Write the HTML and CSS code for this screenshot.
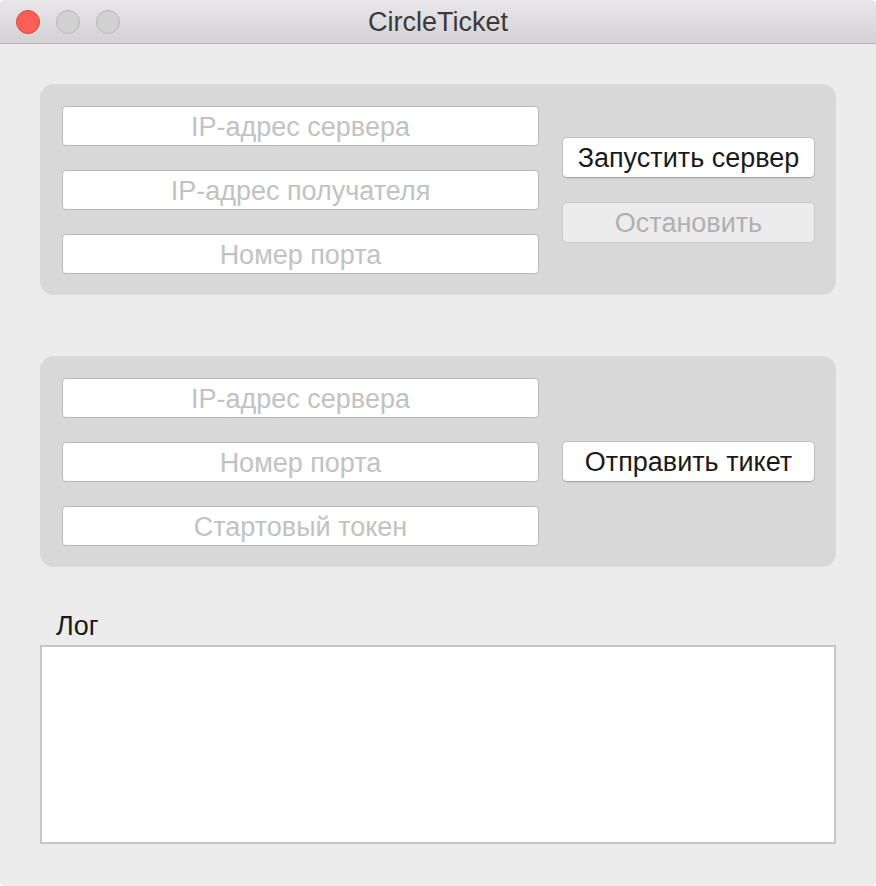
FILE: index.html
```html
<!DOCTYPE html>
<html lang="ru">
<head>
<meta charset="utf-8">
<title>CircleTicket</title>
<link rel="stylesheet" href="styles.css">
</head>
<body>
<div class="window">
  <div class="titlebar">
    <div class="lights">
      <span class="light red"></span>
      <span class="light grey"></span>
      <span class="light grey"></span>
    </div>
    <div class="title">CircleTicket</div>
  </div>
  <div class="content">
    <div class="group">
      <div class="fields">
        <div class="field">IP-адрес сервера</div>
        <div class="field">IP-адрес получателя</div>
        <div class="field">Номер порта</div>
      </div>
      <div class="buttons">
        <div class="btn">Запустить сервер</div>
        <div class="btn disabled">Остановить</div>
      </div>
    </div>
    <div class="group">
      <div class="fields">
        <div class="field">IP-адрес сервера</div>
        <div class="field">Номер порта</div>
        <div class="field">Стартовый токен</div>
      </div>
      <div class="buttons">
        <div class="btn">Отправить тикет</div>
      </div>
    </div>
    <div class="log-label">Лог</div>
    <div class="log"></div>
  </div>
</div>
</body>
</html>
```

FILE: styles.css
```css
* { box-sizing: border-box; }
html, body { margin: 0; padding: 0; background: #ffffff; }
body { font-family: "Liberation Sans", Arial, sans-serif; }
.window {
  width: 876px;
  height: 886px;
  background: #ececec;
  border-radius: 5px;
  overflow: hidden;
  display: flex;
  flex-direction: column;
}
.titlebar {
  height: 44px;
  flex: none;
  background: linear-gradient(#e9e7e9, #d3d1d3);
  border-bottom: 1px solid #b5b3b5;
  position: relative;
  display: flex;
  align-items: center;
  justify-content: center;
}
.lights {
  position: absolute;
  left: 16px;
  top: 10px;
  display: flex;
  gap: 16px;
}
.light {
  width: 24px;
  height: 24px;
  border-radius: 50%;
}
.light.red { background: #fd5f57; border: 1px solid #e0443e; }
.light.grey { background: #d2d1d2; border: 1px solid #b9b8b9; }
.title {
  font-size: 27px;
  color: #3a3a3a;
  margin-top: 1px;
}
.content {
  padding: 40px 40px 0 40px;
  display: flex;
  flex-direction: column;
}
.group {
  background: #d8d8d8;
  border-radius: 14px;
  height: 211px;
  padding: 22px 21px 0 22px;
  display: flex;
  gap: 23px;
  margin-bottom: 61px;
}
.fields {
  width: 477px;
  display: flex;
  flex-direction: column;
  gap: 24px;
}
.field {
  height: 40px;
  background: #fff;
  border: 1px solid #b9b9b9;
  border-radius: 4px;
  color: #c2c2c2;
  font-size: 27px;
  display: flex;
  align-items: center;
  justify-content: center;
  padding-top: 2px;
}
.buttons {
  flex: 1;
  display: flex;
  flex-direction: column;
  justify-content: center;
  gap: 24px;
  padding-bottom: 22px;
}
.btn {
  height: 41px;
  background: #fff;
  border: 1px solid #bdbdbd;
  border-bottom-color: #a8a8a8;
  border-radius: 5px;
  font-size: 27px;
  color: #1a1a1a;
  display: flex;
  align-items: center;
  justify-content: center;
  padding-top: 2px;
  box-shadow: 0 1px 0 rgba(0,0,0,0.06);
}
.btn.disabled {
  background: #ececec;
  border-color: #cacaca;
  color: #b0b0b0;
  box-shadow: none;
}
.log-label {
  margin-top: -17px;
  padding-left: 16px;
  font-size: 27px;
  color: #1a1a1a;
  height: 34px;
  line-height: 30px;
}
.log {
  height: 199px;
  background: #fff;
  border: 2px solid #c6c6c6;
}
```
